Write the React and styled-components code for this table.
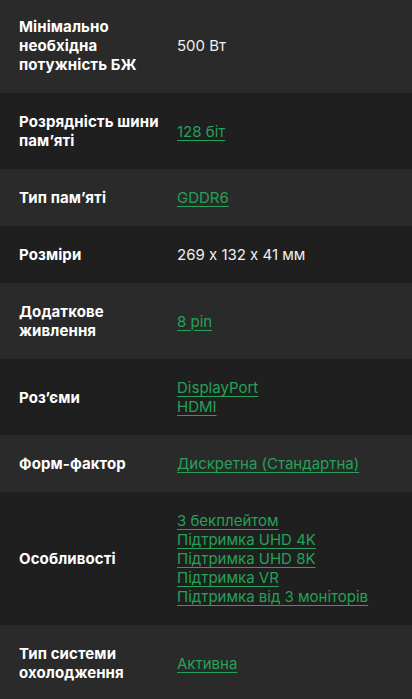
import styled, { createGlobalStyle } from 'styled-components';

const specs = [
    { label: 'Мінімально необхідна потужність БЖ', values: ['500 Вт'] },
    { label: 'Розрядність шини пам\u2019яті', values: ['128 біт'], link: true },
    { label: 'Тип пам\u2019яті', values: ['GDDR6'], link: true },
    { label: 'Розміри', values: ['269 x 132 x 41 мм'] },
    { label: 'Додаткове живлення', values: ['8 pin'], link: true },
    { label: 'Роз\u2019єми', values: ['DisplayPort', 'HDMI'], link: true },
    { label: 'Форм-фактор', values: ['Дискретна (Стандартна)'], link: true },
    {
        label: 'Особливості',
        values: [
            'З бекплейтом',
            'Підтримка UHD 4K',
            'Підтримка UHD 8K',
            'Підтримка VR',
            'Підтримка від 3 моніторів'
        ],
        link: true
    },
    { label: 'Тип системи охолодження', values: ['Активна'], link: true }
];

function App() {
    return (
        <>
            <GlobalStyle />
            <Table>
                {specs.map((row, i) => (
                    <Row key={row.label} $odd={i % 2 === 1}>
                        <Label>{row.label}</Label>
                        <Values>
                            {row.values.map((v) =>
                                row.link ? <Link key={v} href="#">{v}</Link> : <Value key={v}>{v}</Value>
                            )}
                        </Values>
                    </Row>
                ))}
            </Table>
        </>
    );
}

const GlobalStyle = createGlobalStyle`
    body {
        margin: 0;
        background: #2a2a2a;
        font-family: Inter, "Noto Sans", sans-serif;
        font-feature-settings: "calt" 0;
        -webkit-font-smoothing: antialiased;
    }
`;

const Table = styled.div`
    display: flex;
    flex-direction: column;
    margin-top: -2px;
`;

const Row = styled.div`
    display: grid;
    grid-template-columns: 140px 1fr;
    column-gap: 18px;
    align-items: center;
    padding: 19px 19px;
    background: ${(p) => (p.$odd ? '#1f1f1f' : '#2a2a2a')};
`;

const Label = styled.div`
    color: #ffffff;
    font-size: 15px;
    font-weight: 700;
    line-height: 19px;
    letter-spacing: 0.1px;
`;

const Values = styled.div`
    display: flex;
    flex-direction: column;
    align-items: flex-start;
`;

const Value = styled.span`
    color: #f0f0f0;
    font-size: 15px;
    line-height: 19px;
`;

const Link = styled.a`
    color: #25a158;
    font-size: 15px;
    line-height: 19px;
    text-decoration: underline;
    text-decoration-thickness: 1px;
    text-underline-offset: 3px;
`;

export default App;
